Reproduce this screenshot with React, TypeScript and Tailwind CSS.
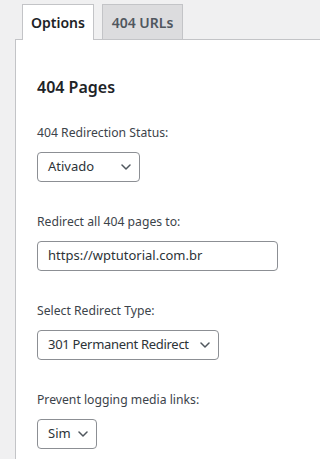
import React from "react";

function Chevron() {
  return (
    <svg viewBox="0 0 10 6" className="w-[10px] h-[6px] flex-shrink-0" fill="none">
      <path d="M1 1L5 5L9 1" stroke="#50575e" strokeWidth="1.5" strokeLinecap="round" strokeLinejoin="round" />
    </svg>
  );
}

function Select({ value, width, tight }: { value: string; width: string; tight?: boolean }) {
  return (
    <div
      className={`${width} h-[30px] flex items-center justify-between pl-[10px] pr-[8px] border border-[#8c8f94] rounded-[4px] bg-white text-[13px] text-[#2c3338] whitespace-nowrap`}
    >
      <span className={tight ? "tracking-[-0.3px]" : ""}>{value}</span>
      <Chevron />
    </div>
  );
}

function Field({ label, children }: { label: string; children: React.ReactNode }) {
  return (
    <div className="flex flex-col mb-[30px]">
      <label className="h-[20px] leading-[20px] text-[12.2px] text-[#3c434a]">{label}</label>
      <div className="mt-[9px]">{children}</div>
    </div>
  );
}

export default function App() {
  return (
    <main
      className="min-h-screen bg-[#f0f0f1] overflow-hidden"
      style={{ fontFamily: "'Noto Sans', 'Open Sans', sans-serif" }}
    >
      {/* tabs */}
      <div className="flex items-end gap-[8px] pl-[22px] pt-[4px]">
        <div className="relative z-10 -mb-px w-[72px] h-[36px] flex items-center justify-center border border-b-0 border-[#c3c4c7] bg-white text-[14px] font-semibold text-[#1d2327]">
          Options
        </div>
        <div className="w-[81px] h-[35px] flex items-center justify-center border border-b-0 border-[#c3c4c7] bg-[#dcdcde] text-[14px] font-semibold text-[#50575e]">
          404 URLs
        </div>
      </div>

      {/* panel */}
      <section className="ml-[15px] min-h-[430px] border-l border-t border-[#c3c4c7] bg-white pl-[21px] pt-[35px]">
        <h2 className="h-[24px] leading-[24px] text-[16px] font-semibold text-[#1d2327] mb-[24px]">404 Pages</h2>

        <Field label="404 Redirection Status:">
          <Select value="Ativado" width="w-[103px]" />
        </Field>

        <Field label="Redirect all 404 pages to:">
          <div className="w-[241px] h-[30px] flex items-center px-[10px] border border-[#8c8f94] rounded-[4px] bg-white text-[13px] text-[#2c3338]">
            https://wptutorial.com.br
          </div>
        </Field>

        <Field label="Select Redirect Type:">
          <Select value="301 Permanent Redirect" width="w-[182px]" tight />
        </Field>

        <Field label="Prevent logging media links:">
          <Select value="Sim" width="w-[60px]" />
        </Field>
      </section>
    </main>
  );
}
